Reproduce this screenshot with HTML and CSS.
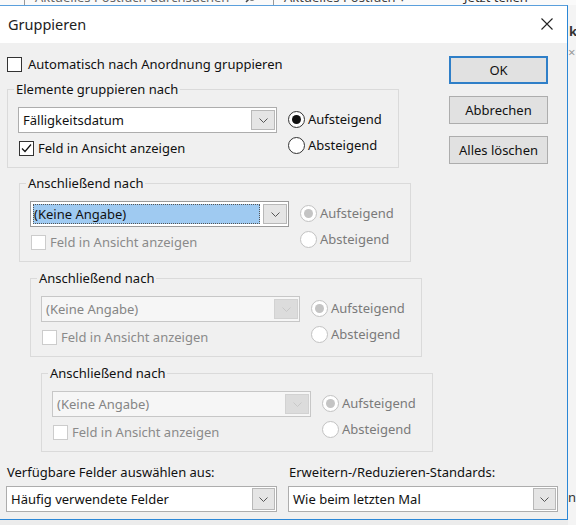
FILE: index.html
```html
<!DOCTYPE html>
<html lang="de">
<head>
<meta charset="utf-8">
<title>Gruppieren</title>
<link rel="stylesheet" href="styles.css">
</head>
<body>
<div class="screen">
  <div class="app-top">
    <div class="app-top-inner">
      <span class="app-sep"></span>
      <span class="app-search">Aktuelles Postfach durchsuchen</span>
      <svg class="app-mag" width="12" height="12" viewBox="0 0 12 12"><circle cx="7" cy="5" r="4" fill="none" stroke="#444" stroke-width="1.3"/><path d="M4 8 L1 11" stroke="#444" stroke-width="1.5"/></svg>
      <span class="app-sep"></span>
      <span class="app-scope">Aktuelles Postfach ▾</span>
      <span class="app-share">Jetzt teilen</span>
    </div>
  </div>
  <div class="desk">
    <div class="dialog">
      <div class="titlebar">
        <span class="title">Gruppieren</span>
        <svg class="close" width="12" height="12" viewBox="0 0 12 12"><path d="M0.5 0.5 L11.5 11.5 M11.5 0.5 L0.5 11.5" stroke="#222" stroke-width="1.1"/></svg>
      </div>
      <div class="body">
        <div class="main">
          <div class="left">
            <label class="check auto"><span class="box"></span>Automatisch nach Anordnung gruppieren</label>

            <div class="group g1">
              <span class="legend">Elemente gruppieren nach</span>
              <div class="group-row">
                <div class="group-left">
                  <div class="combo"><span class="combo-text">Fälligkeitsdatum</span><span class="combo-btn"><svg width="9" height="5" viewBox="0 0 9 5"><path d="M0.5 0.5 L4.5 4.5 L8.5 0.5" fill="none" stroke="#555" stroke-width="1"/></svg></span></div>
                  <label class="check field"><span class="box checked"><svg width="13" height="13" viewBox="0 0 13 13"><path d="M2 6.5 L5 9.5 L11 2.5" fill="none" stroke="#111" stroke-width="1.2"/></svg></span>Feld in Ansicht anzeigen</label>
                </div>
                <div class="radios">
                  <label class="radio on"><span class="dot"></span>Aufsteigend</label>
                  <label class="radio"><span class="dot"></span>Absteigend</label>
                </div>
              </div>
            </div>

            <div class="group g2">
              <span class="legend">Anschließend nach</span>
              <div class="group-row">
                <div class="group-left">
                  <div class="combo focus"><span class="combo-text"><span class="sel">(Keine Angabe)</span></span><span class="combo-btn"><svg width="9" height="5" viewBox="0 0 9 5"><path d="M0.5 0.5 L4.5 4.5 L8.5 0.5" fill="none" stroke="#555" stroke-width="1"/></svg></span></div>
                  <label class="check field dis"><span class="box"></span>Feld in Ansicht anzeigen</label>
                </div>
                <div class="radios dis">
                  <label class="radio on"><span class="dot"></span>Aufsteigend</label>
                  <label class="radio"><span class="dot"></span>Absteigend</label>
                </div>
              </div>
            </div>

            <div class="group g3">
              <span class="legend">Anschließend nach</span>
              <div class="group-row">
                <div class="group-left">
                  <div class="combo disabled"><span class="combo-text">(Keine Angabe)</span><span class="combo-btn"><svg width="9" height="5" viewBox="0 0 9 5"><path d="M0.5 0.5 L4.5 4.5 L8.5 0.5" fill="none" stroke="#c8c8c8" stroke-width="1"/></svg></span></div>
                  <label class="check field dis"><span class="box"></span>Feld in Ansicht anzeigen</label>
                </div>
                <div class="radios dis">
                  <label class="radio on"><span class="dot"></span>Aufsteigend</label>
                  <label class="radio"><span class="dot"></span>Absteigend</label>
                </div>
              </div>
            </div>

            <div class="group g4">
              <span class="legend">Anschließend nach</span>
              <div class="group-row">
                <div class="group-left">
                  <div class="combo disabled"><span class="combo-text">(Keine Angabe)</span><span class="combo-btn"><svg width="9" height="5" viewBox="0 0 9 5"><path d="M0.5 0.5 L4.5 4.5 L8.5 0.5" fill="none" stroke="#c8c8c8" stroke-width="1"/></svg></span></div>
                  <label class="check field dis"><span class="box"></span>Feld in Ansicht anzeigen</label>
                </div>
                <div class="radios dis">
                  <label class="radio on"><span class="dot"></span>Aufsteigend</label>
                  <label class="radio"><span class="dot"></span>Absteigend</label>
                </div>
              </div>
            </div>
          </div>

          <div class="buttons">
            <button class="btn default">OK</button>
            <button class="btn">Abbrechen</button>
            <button class="btn">Alles löschen</button>
          </div>
        </div>

        <div class="bottom">
          <div class="field-col">
            <span class="bottom-label">Verfügbare Felder auswählen aus:</span>
            <div class="combo"><span class="combo-text">Häufig verwendete Felder</span><span class="combo-btn"><svg width="9" height="5" viewBox="0 0 9 5"><path d="M0.5 0.5 L4.5 4.5 L8.5 0.5" fill="none" stroke="#555" stroke-width="1"/></svg></span></div>
          </div>
          <div class="field-col">
            <span class="bottom-label">Erweitern-/Reduzieren-Standards:</span>
            <div class="combo"><span class="combo-text">Wie beim letzten Mal</span><span class="combo-btn"><svg width="9" height="5" viewBox="0 0 9 5"><path d="M0.5 0.5 L4.5 4.5 L8.5 0.5" fill="none" stroke="#555" stroke-width="1"/></svg></span></div>
          </div>
        </div>
      </div>
    </div>
    <div class="app-side">
      <span class="side-k">k</span>
      <span class="side-x">×</span>
      <span class="side-n">n</span>
    </div>
  </div>
</div>
</body>
</html>
```

FILE: styles.css
```css
* { box-sizing: border-box; }

html, body {
  margin: 0;
  padding: 0;
}

body {
  width: 576px;
  height: 525px;
  overflow: hidden;
  background: #ececec;
  font-family: "Noto Sans", "Open Sans", sans-serif;
  font-size: 13px;
  color: #111;
}

.screen {
  width: 576px;
  height: 525px;
  display: flex;
  flex-direction: column;
}

/* background application strip */
.app-top {
  height: 5px;
  overflow: hidden;
  background: #fafafa;
}

.app-top-inner {
  margin-top: -12px;
  height: 18px;
  display: flex;
  align-items: center;
  gap: 10px;
  padding-left: 24px;
  font-size: 13px;
  color: #666;
  white-space: nowrap;
}

.app-sep {
  width: 1px;
  height: 18px;
  background: #999;
}

.app-search { width: 200px; }
.app-mag { margin-right: 6px; }
.app-scope { width: 170px; color: #444; }
.app-share { color: #333; }

.desk {
  flex: 1;
  display: flex;
}

/* dialog window */
.dialog {
  width: 568px;
  height: 515px;
  display: flex;
  flex-direction: column;
  background: #f0f0f0;
  border-top: 1px solid #5a9fdc;
  border-right: 1px solid #2b87d6;
  border-bottom: 1px solid #2b87d6;
}

.titlebar {
  height: 37px;
  background: #fff;
  display: flex;
  align-items: center;
  padding: 0 14px 2px 8px;
}

.title {
  flex: 1;
  font-size: 14.5px;
  color: #222;
}

.close { margin-top: 1px; }

.body {
  flex: 1;
  display: flex;
  flex-direction: column;
}

.main {
  display: flex;
  padding: 13px 19px 0 7px;
}

.left {
  flex: 1;
  display: flex;
  flex-direction: column;
}

/* checkboxes */
.check {
  display: flex;
  align-items: center;
  height: 17px;
  line-height: 17px;
  white-space: nowrap;
}

.box {
  width: 15px;
  height: 15px;
  border: 1px solid #333;
  background: #fff;
  display: inline-flex;
  align-items: center;
  justify-content: center;
}

.check.auto .box { margin-right: 6px; }
.check.field { margin-top: 7px; margin-left: 1px; }
.check.field .box { margin-right: 4px; }

.check.dis { color: #8a8a8a; }
.check.dis .box { border-color: #cccccc; }

/* group boxes */
.group {
  width: 392px;
  height: 79px;
  border: 1px solid #dadada;
}

.g1 { margin-top: 16px; }
.g2 { margin-top: 15px; margin-left: 12px; }
.g3 { margin-top: 16px; margin-left: 23px; }
.g4 { margin-top: 16px; margin-left: 34px; }

.legend {
  display: block;
  width: max-content;
  height: 17px;
  line-height: 17px;
  margin: -9px 0 0 6px;
  padding: 0 2px;
  background: #f0f0f0;
  color: #111;
}

.group-row {
  display: flex;
  margin-top: 9px;
  padding-left: 10px;
}

.group-left {
  display: flex;
  flex-direction: column;
}

/* combo boxes */
.combo {
  width: 259px;
  height: 26px;
  display: flex;
  background: #fff;
  border: 1px solid #adadad;
}

.combo-text {
  flex: 1;
  display: flex;
  align-items: center;
  padding-left: 4px;
  white-space: nowrap;
  overflow: hidden;
}

.combo-btn {
  width: 24px;
  margin: 2px 1px 2px 0;
  background: #e5e5e5;
  border: 1px solid #b8b8b8;
  display: flex;
  align-items: center;
  justify-content: center;
}

.combo.focus {
  border-color: #9a9a9a;
}

.combo.focus .combo-text {
  padding: 2px 3px 2px 2px;
}

.sel {
  flex: 1;
  height: 100%;
  display: flex;
  align-items: center;
  padding-left: 1px;
  background: #9fcaf1;
  outline: 1px dotted #555;
  outline-offset: -1px;
}

.combo.disabled {
  background: #f6f6f6;
  border-color: #c7c7c7;
  color: #858585;
}

.combo.disabled .combo-btn {
  background: #dcdcdc;
  border-color: #d2d2d2;
}

/* radios */
.radios {
  display: flex;
  flex-direction: column;
  gap: 9px;
  margin-left: 11px;
  padding-top: 4px;
}

.radio {
  display: flex;
  align-items: center;
  gap: 3px;
  height: 17px;
  line-height: 17px;
  white-space: nowrap;
}

.dot {
  width: 17px;
  height: 17px;
  border-radius: 50%;
  border: 1px solid #333;
  background: #fff;
  display: inline-flex;
  align-items: center;
  justify-content: center;
}

.radio.on .dot::after {
  content: "";
  width: 9px;
  height: 9px;
  border-radius: 50%;
  background: #111;
}

.radios.dis .radio { color: #7a7a7a; }
.radios.dis .dot { border-color: #c2c2c2; }
.radios.dis .radio.on .dot::after { background: #c4c4c4; }

/* buttons */
.buttons {
  width: 99px;
  display: flex;
  flex-direction: column;
  gap: 12px;
}

.btn {
  height: 28px;
  padding: 0;
  font-family: inherit;
  font-size: 13px;
  color: #111;
  background: #e1e1e1;
  border: 1px solid #adadad;
}

.btn.default {
  border: 2px solid #2f7fc8;
}

/* bottom */
.bottom {
  margin-top: auto;
  display: grid;
  grid-template-columns: 271px 270px;
  column-gap: 11px;
  padding: 0 9px 7px 6px;
}

.field-col {
  display: flex;
  flex-direction: column;
  gap: 5px;
}

.bottom-label {
  height: 17px;
  line-height: 17px;
  padding-left: 1px;
  white-space: nowrap;
}

.field-col .combo {
  width: 100%;
}

.field-col .combo-btn {
  width: 23px;
  margin: 1px 1px 1px 0;
}

/* right background strip */
.app-side {
  flex: 1;
  display: flex;
  flex-direction: column;
  background: #f4f4f4;
  overflow: hidden;
  font-size: 13px;
  color: #333;
}

.side-k {
  margin-top: 19px;
  margin-left: 1px;
  font-weight: bold;
  line-height: 14px;
}

.side-x {
  margin-top: 8px;
  line-height: 12px;
  color: #999;
}

.side-n {
  margin-top: auto;
  margin-bottom: 21px;
  line-height: 14px;
}
```
